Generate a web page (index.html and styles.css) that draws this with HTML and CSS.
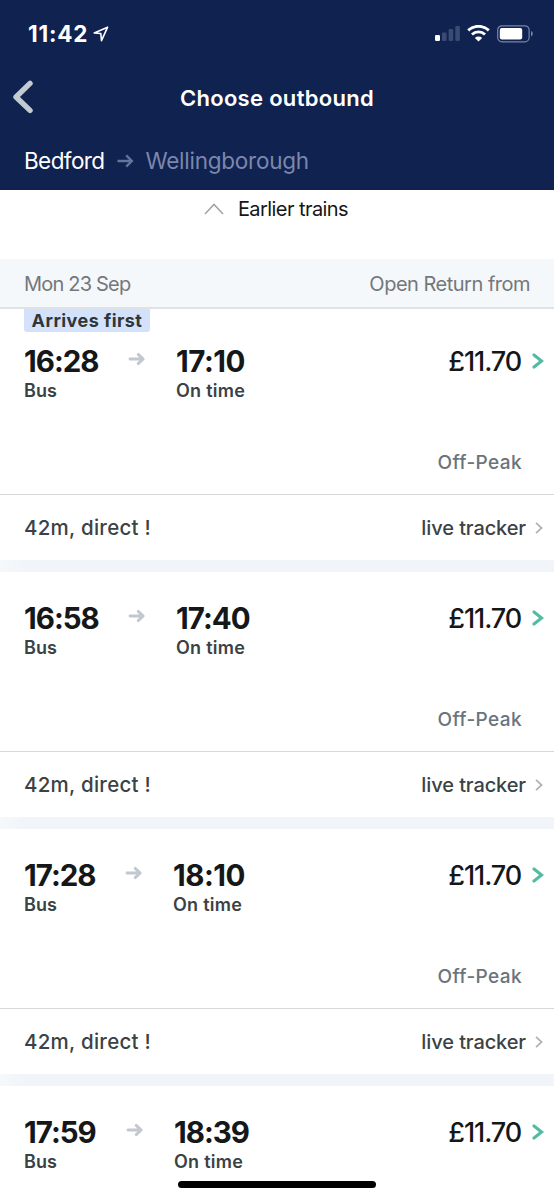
FILE: index.html
```html
<!DOCTYPE html>
<html lang="en">
<head>
<meta charset="utf-8">
<title>Choose outbound</title>
<link rel="stylesheet" href="styles.css">
</head>
<body>
<svg class="defs" width="0" height="0">
  <symbol id="arrow" viewBox="0 0 18 14"><path d="M2 7H15M10.2 2.4 15.2 7l-5 4.6" fill="none" stroke="currentColor" stroke-width="2.9" stroke-linecap="round" stroke-linejoin="round"/></symbol>
  <symbol id="arrow-light" viewBox="0 0 18 14"><path d="M1.5 7H15.5M10.2 1.4 15.9 7l-5.7 5.6" fill="none" stroke="currentColor" stroke-width="2.3"/></symbol>
  <symbol id="chevron" viewBox="0 0 12 16"><path d="M2 2l7.6 6L2 14" fill="none" stroke="currentColor" stroke-width="3.1" stroke-linecap="round" stroke-linejoin="miter"/></symbol>
  <symbol id="chevron-thin" viewBox="0 0 8 12"><path d="M1 .9 6.6 6 1 11.1" fill="none" stroke="currentColor" stroke-width="1.7"/></symbol>
</svg>
<div class="screen">
  <header class="header">
    <div class="status">
      <span class="clock">11:42</span>
      <svg class="location" width="16" height="16" viewBox="0 0 16 16"><path d="M1.2 7 14.6 1.2 8.5 14.6 7.8 7.5z" fill="none" stroke="#fff" stroke-width="1.6" stroke-linejoin="round"/></svg>
      <svg class="signal" width="26" height="17" viewBox="0 0 26 17"><rect x="0" y="10" width="5" height="6" rx="1.3" fill="#fff"/><g fill="#3b4a73"><rect x="7" y="7.5" width="4.6" height="8.5" rx="1.3"/><rect x="13.6" y="4" width="4.6" height="12" rx="1.3"/><rect x="20.3" y="1" width="4.6" height="15" rx="1.3"/></g></svg>
      <svg class="wifi" width="23" height="17" viewBox="0 0 23 17"><path d="M1.2 5.4a15 15 0 0 1 20.6 0M5 9.5a9.3 9.3 0 0 1 13 0" fill="none" stroke="#fff" stroke-width="2.9"/><path d="M7.8 12.9a5.4 5.4 0 0 1 7.4 0L11.5 16.6z" fill="#fff"/></svg>
      <svg class="battery" width="36" height="18" viewBox="0 0 36 18"><rect x=".7" y=".8" width="31.4" height="16" rx="4.2" fill="none" stroke="#7984a5" stroke-width="1.2"/><rect x="2.8" y="3" width="22.4" height="11.6" rx="2" fill="#fff"/><path d="M34 6v5.4q1.8-.8 1.8-2.7T34 6z" fill="#7984a5"/></svg>
    </div>
    <div class="nav">
      <svg class="back" width="22" height="34" viewBox="0 0 22 34"><path d="M18 3.4 4 17l14 13.4" fill="none" stroke="#c1cbd0" stroke-width="5.4" stroke-linecap="round" stroke-linejoin="round"/></svg>
      <h1 class="title">Choose outbound</h1>
    </div>
    <div class="route"><span class="from">Bedford</span><svg class="route-arrow"><use href="#arrow-light"/></svg><span class="to">Wellingborough</span></div>
  </header>
  <div class="earlier"><svg width="20" height="12" viewBox="0 0 20 12"><path d="M1 11 10 1.4 19 11" fill="none" stroke="#a0a3a6" stroke-width="1.5"/></svg><span>Earlier trains</span></div>
  <div class="datebar"><span class="date">Mon 23 Sep</span><span class="fare-type">Open Return from</span></div>
  <main class="list">
    <section class="card first">
      <div class="badge"><span>Arrives first</span></div>
      <div class="trip">
        <div class="stop"><b class="time">16:28</b><span class="note bus">Bus</span></div><svg class="arrow"><use href="#arrow"/></svg>
        <div class="stop"><b class="time wide">17:10</b><span class="note">On time</span></div>
        <span class="price">£11.70</span><svg class="go"><use href="#chevron"/></svg>
      </div>
      <div class="ticket">Off-Peak</div>
      <div class="foot"><span class="duration">42m, direct !</span><span class="tracker">live tracker</span><svg class="more"><use href="#chevron-thin"/></svg></div>
    </section>
    <section class="card">
      <div class="trip">
        <div class="stop"><b class="time">16:58</b><span class="note bus">Bus</span></div><svg class="arrow"><use href="#arrow"/></svg>
        <div class="stop"><b class="time">17:40</b><span class="note">On time</span></div>
        <span class="price">£11.70</span><svg class="go"><use href="#chevron"/></svg>
      </div>
      <div class="ticket">Off-Peak</div>
      <div class="foot"><span class="duration">42m, direct !</span><span class="tracker">live tracker</span><svg class="more"><use href="#chevron-thin"/></svg></div>
    </section>
    <section class="card">
      <div class="trip">
        <div class="stop narrow"><b class="time">17:28</b><span class="note bus">Bus</span></div><svg class="arrow"><use href="#arrow"/></svg>
        <div class="stop"><b class="time wide">18:10</b><span class="note">On time</span></div>
        <span class="price">£11.70</span><svg class="go"><use href="#chevron"/></svg>
      </div>
      <div class="ticket">Off-Peak</div>
      <div class="foot"><span class="duration">42m, direct !</span><span class="tracker">live tracker</span><svg class="more"><use href="#chevron-thin"/></svg></div>
    </section>
    <section class="card">
      <div class="trip">
        <div class="stop mid"><b class="time">17:59</b><span class="note bus">Bus</span></div><svg class="arrow"><use href="#arrow"/></svg>
        <div class="stop"><b class="time">18:39</b><span class="note">On time</span></div>
        <span class="price">£11.70</span><svg class="go"><use href="#chevron"/></svg>
      </div>
    </section>
  </main>
  <div class="home"></div>
</div>
</body>
</html>
```
FILE: styles.css
```css
* { box-sizing: border-box; }
body { margin: 0; font-family: Inter, "Liberation Sans", sans-serif; color: #151719; background: #fff; }
svg { display: block; flex: none; }
.defs { position: absolute; }
.screen { position: relative; width: 554px; height: 1200px; overflow: hidden; background: #fff; }
.header { height: 190px; background: #0f2250; color: #fff; }
.status { display: flex; align-items: center; height: 67px; padding: 0 21px 0 28px; }
.clock { font-size: 22.5px; font-weight: 700; letter-spacing: .8px; line-height: 26px; }
.location { margin-left: 5px; }
.signal { margin-left: auto; }
.wifi { margin-left: 6px; }
.battery { margin-left: 7px; }
.nav { display: flex; align-items: center; height: 62px; padding-left: 12px; }
.back { margin-bottom: 2px; }
.title { flex: 1; margin: 0 34px 0 0; text-align: center; font-size: 22px; line-height: 28px; font-weight: 600; letter-spacing: .3px; }
.route { display: flex; align-items: center; height: 63px; padding: 0 24px; font-size: 22.5px; letter-spacing: -.6px; }
.route-arrow { width: 18px; height: 14px; margin: 0 11px 0 12px; color: #66739a; }
.to { color: #7b87ab; letter-spacing: -.25px; }
.earlier { display: flex; align-items: center; justify-content: center; gap: 14px; height: 69px; padding: 0 2px 31px 0; font-size: 20px; letter-spacing: -.57px; }
.datebar { display: flex; align-items: center; justify-content: space-between; height: 50px; padding: 2px 24px 0; background: #f4f8fb; border-bottom: 2px solid #dfe2e6; color: #74777a; font-size: 20px; letter-spacing: -.5px; }
.date { letter-spacing: -.8px; }
.list { display: grid; gap: 12px; background: linear-gradient(90deg, #f6f9fc, #f1f4f8 24px); }
.card { height: 245px; padding-top: 29px; background: #fff; }
.first { height: 251px; padding-top: 0; }
.badge { display: flex; height: 35px; padding-left: 24px; }
.badge span { width: 126px; height: 23px; border-radius: 0 0 3px 3px; background: #d3e1fb; color: #303638; text-align: center; font-size: 18px; line-height: 24px; font-weight: 700; letter-spacing: .45px; }
.trip { display: flex; height: 107px; padding: 0 10px 0 24px; }
.stop { width: 75px; }
.narrow { width: 72px; }
.mid { width: 73px; }
.time { display: block; width: max-content; font-size: 29.5px; line-height: 34px; font-weight: 700; letter-spacing: -1px; }
.wide { letter-spacing: -.5px; }
.note { display: block; width: max-content; margin-top: 1px; font-size: 18px; line-height: 24px; font-weight: 600; color: #3b4245; letter-spacing: .25px; }
.bus { letter-spacing: .1px; }
.arrow { width: 18px; height: 14px; margin: 8px 30px 0 29px; color: #c2c8cd; }
.price { margin-left: auto; font-size: 27px; line-height: 36px; font-weight: 500; letter-spacing: -1.1px; }
.go { width: 12px; height: 16px; margin: 9px 0 0 11px; color: #52bca2; }
.ticket { height: 43px; padding: 0 32px; text-align: right; font-size: 19px; line-height: 24px; font-weight: 500; color: #69747c; letter-spacing: .4px; }
.foot { display: flex; align-items: center; height: 66px; padding: 0 11px 0 24px; border-top: 1px solid #d5d8da; font-size: 20px; font-weight: 500; color: #3b4245; }
.duration { font-size: 20.5px; letter-spacing: .25px; }
.tracker { margin-left: auto; letter-spacing: -.1px; }
.more { width: 8px; height: 12px; margin-left: 9px; color: #aeb2b5; }
.home { position: absolute; left: 178px; bottom: 12px; width: 198px; height: 7px; border-radius: 4px; background: #000; }
```
